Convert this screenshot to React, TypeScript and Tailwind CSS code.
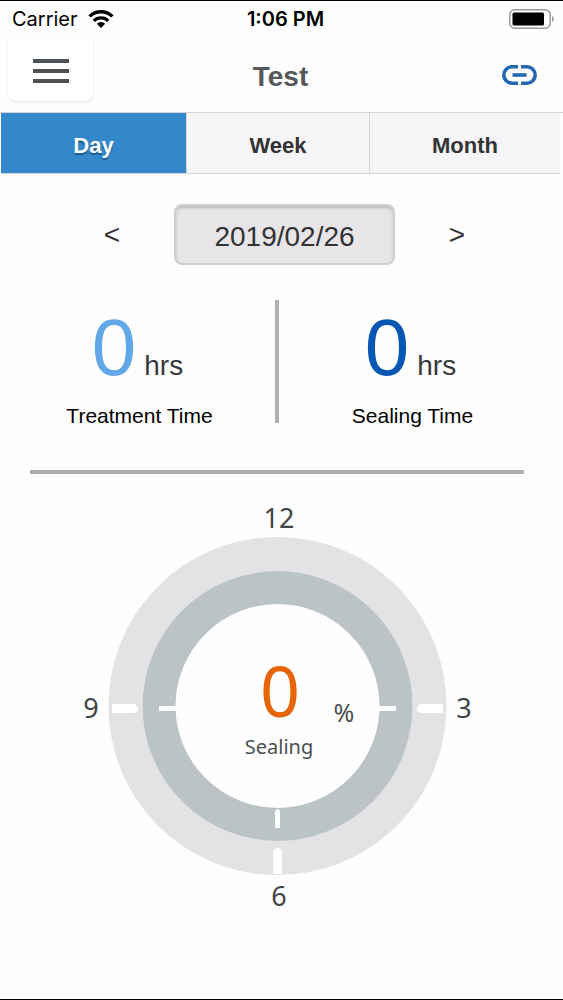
import React from "react";

type Period = "day" | "week" | "month";

interface StatProps {
  value: number;
  label: string;
  valueClass: string;
}

const tabs: { id: Period; label: string }[] = [
  { id: "day", label: "Day" },
  { id: "week", label: "Week" },
  { id: "month", label: "Month" },
];

function WifiIcon() {
  return (
    <svg width="26" height="18" viewBox="0 0 26 18" fill="none" aria-hidden="true">
      <path d="M1.6 6.4a16.3 16.3 0 0 1 22.8 0" stroke="#000" strokeWidth="3.4" />
      <path d="M5.8 10.8a10.3 10.3 0 0 1 14.4 0" stroke="#000" strokeWidth="3.2" />
      <path d="M13 18l-4.2-4.2a6 6 0 0 1 8.4 0z" fill="#000" />
    </svg>
  );
}

function BatteryIcon() {
  return (
    <svg width="46" height="20" viewBox="0 0 46 20" aria-hidden="true">
      <rect x="0.8" y="0.8" width="40.4" height="18.4" rx="5" fill="none" stroke="#9a9a9a" strokeWidth="1.5" />
      <rect x="3.5" y="3.5" width="31.5" height="13" rx="1.5" fill="#000" />
      <path d="M43 7c2.4.8 2.4 5.2 0 6z" fill="#9a9a9a" />
    </svg>
  );
}

function LinkIcon() {
  return (
    <svg width="35" height="20" viewBox="0 0 35 20" fill="none" stroke="#2268b2" strokeWidth="3.6" aria-hidden="true">
      <path d="M16 1.8h-6a8.2 8.2 0 0 0 0 16.4h6" />
      <path d="M19 1.8h6a8.2 8.2 0 0 1 0 16.4h-6" />
      <path d="M10.5 10h14" />
    </svg>
  );
}

function StatusBar() {
  return (
    <div className="grid grid-cols-3 items-center h-9 pl-3 pr-2 font-['Inter',sans-serif] text-xl text-black">
      <div className="flex items-center gap-2.5">
        <span>Carrier</span>
        <WifiIcon />
      </div>
      <span className="pl-1 text-center font-semibold">1:06 PM</span>
      <div className="flex justify-end">
        <BatteryIcon />
      </div>
    </div>
  );
}

function Header() {
  return (
    <header className="grid grid-cols-3 items-center h-[75px] pl-2 pr-[26px]">
      <button
        type="button"
        aria-label="Menu"
        className="flex items-center justify-center self-start w-[85px] h-16 pt-1 rounded-lg bg-white shadow-[0_1px_3px_#e4e4e8]"
      >
        <svg width="36" height="24" viewBox="0 0 36 24" fill="#4b5155" aria-hidden="true">
          <rect width="36" height="4" />
          <rect y="10" width="36" height="4" />
          <rect y="20" width="36" height="4" />
        </svg>
      </button>
      <h1 className="pl-4 pt-1 text-center text-[28px] font-bold text-[#55595c]">Test</h1>
      <button type="button" aria-label="Link device" className="justify-self-end">
        <LinkIcon />
      </button>
    </header>
  );
}

function Stat({ value, label, valueClass }: StatProps) {
  return (
    <div className="flex flex-col items-center pt-2">
      <p className="flex items-baseline gap-2 pr-1 text-[#38383a]">
        <span className={`text-[80px] leading-20 ${valueClass}`}>{value}</span>
        <span className="text-[28px] leading-8">hrs</span>
      </p>
      <p className="pt-3 text-[21px] leading-8 text-black">{label}</p>
    </div>
  );
}

function Dial({ percent }: { percent: number }) {
  return (
    <svg
      viewBox="0 0 400 420"
      className="block w-[400px] max-w-full mx-auto font-['Noto_Sans',sans-serif]"
      role="img"
      aria-label={`${percent}% sealing`}
    >
      {/* rings */}
      <circle cx="200.5" cy="206" r="152" fill="none" stroke="#e3e2e4" strokeWidth="34" />
      <circle cx="200.5" cy="206" r="118.5" fill="none" stroke="#bbc3c7" strokeWidth="33" />

      {/* hour marks */}
      <g fill="#fff">
        <path d="M35 204h22q4 1 4 4.5t-4 4.5H35z" />
        <path d="M366 204h-22q-4 1-4 4.5t4 4.5h22z" />
        <path d="M196 374v-22q1-4 4.500-4t4.500 4v22z" />
        <rect x="82" y="206" width="18" height="5" />
        <rect x="301" y="206" width="18" height="5" />
        <path d="M198 328v-16q.5-3 2.500-3t2.500 3v16z" />
      </g>

      <g fill="#434547" fontSize="27" textAnchor="middle">
        <text x="202" y="28">12</text>
        <text x="387" y="218">3</text>
        <text x="202" y="406">6</text>
        <text x="14" y="218">9</text>
      </g>

      {/* center reading */}
      <text x="203" y="217" fontSize="70" fill="#e66506" textAnchor="middle">{percent}</text>
      <text x="267" y="222" fontSize="25" fill="#4d4f51" textAnchor="middle">%</text>
      <text x="202" y="254" fontSize="20" fill="#4d4f51" textAnchor="middle">Sealing</text>
    </svg>
  );
}

export default function App() {
  const [period, setPeriod] = React.useState<Period>("day");

  return (
    <main className="min-h-screen bg-[#fefefe] border-y border-black font-['Liberation_Sans',Arial,sans-serif]">
      <StatusBar />
      <Header />

      <nav className="border-t border-[#d6d4d8] pl-px pr-[3px]">
        <div className="grid grid-cols-[186fr_183fr_190fr] h-[61px]">
          {tabs.map((tab) => (
            <button
              key={tab.id}
              type="button"
              aria-pressed={period === tab.id}
              onClick={() => setPeriod(tab.id)}
              className={`border-r border-b last:border-r-0 border-[#d6d4d8] pt-1 text-[22px] font-bold ${
                period === tab.id
                  ? "bg-[#3388cb] text-white [text-shadow:0_2px_1px_#1d5a8c]"
                  : "bg-[#f5f4f6] text-[#333335]"
              }`}
            >
              {tab.label}
            </button>
          ))}
        </div>
      </nav>

      {/* date picker */}
      <div className="flex items-center justify-center gap-[52px] pt-[30px] pl-1.5 text-[#333335]">
        <button type="button" aria-label="Previous day" className="w-5 text-[28px]">
          &lt;
        </button>
        <button
          type="button"
          className="w-[221px] h-[61px] pt-1 rounded-lg border-2 border-[#d0ced1] bg-[#e7e5e8] text-[28px] shadow-[inset_0_2px_3px_#bdbbbe]"
        >
          2019/02/26
        </button>
        <button type="button" aria-label="Next day" className="w-5 text-[28px]">
          &gt;
        </button>
      </div>

      <div className="pr-[9px]">
        <section className="grid grid-cols-[1fr_4px_1fr] pt-[35px]">
          <div className="pl-1">
            <Stat value={0} label="Treatment Time" valueClass="text-[#62a8e9]" />
          </div>
          <div className="h-[123px] bg-[#b0b0b0]" />
          <div className="pr-2">
            <Stat value={0} label="Sealing Time" valueClass="text-[#0656b4]" />
          </div>
        </section>

        <hr className="mx-[30px] mt-[38px] mb-[26px] border-t-4 border-[#adadad]" />

        <Dial percent={0} />
      </div>
    </main>
  );
}
